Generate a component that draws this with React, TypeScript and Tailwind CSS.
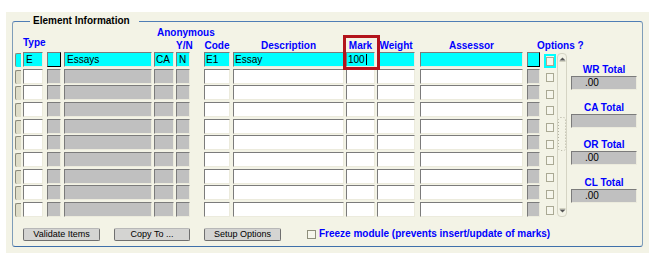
const inset =
  "border border-t-[#7b7b7b] border-l-[#7b7b7b] border-b-[#ecebdd] border-r-[#ecebdd]";

function Cell({ cls, children }: { cls: string; children?: React.ReactNode }) {
  return (
    <div className={`${inset} ${cls} text-[10px] leading-[13px] text-black whitespace-nowrap overflow-hidden`}>
      {children}
    </div>
  );
}

function Row({ active }: { active: boolean }) {
  const white = active ? "bg-[#00ffff]" : "bg-white";
  const grey = active ? "bg-[#00ffff]" : "bg-[#c0c0c0]";
  const small = active
    ? "bg-[#00ffff] !border-b-black !border-r-black"
    : "bg-[#c0c0c0]";
  return (
    <div className="flex h-[15px]">
      <div
        className={`ml-[2px] mt-[1px] w-[6px] rounded-l-[2px] border-l border-t border-[#8a8a7a] ${
          active ? "bg-[#00ffff]" : "bg-[#deddc9]"
        }`}
      />
      <Cell cls={`ml-[2px] w-[20px] pl-[2px] ${white}`}>{active && "E"}</Cell>
      <Cell cls={`ml-[4px] w-[14px] ${small}`} />
      <Cell cls={`ml-[3px] w-[88px] pl-[2px] ${grey}`}>{active && "Essays"}</Cell>
      <Cell cls={`ml-[2px] w-[20px] pl-[1px] ${grey}`}>{active && "CA"}</Cell>
      <Cell cls={`ml-[2px] w-[14px] pl-[2px] ${grey}`}>{active && "N"}</Cell>
      <Cell cls={`ml-[14px] w-[26px] pl-[1px] ${white}`}>{active && "E1"}</Cell>
      <Cell cls={`ml-[3px] w-[111px] pl-[1px] ${white}`}>{active && "Essay"}</Cell>
      <Cell cls={`ml-[2px] w-[29px] pl-[1px] ${white}`}>
        {active && (
          <span className="flex items-center">
            100
            <span className="ml-[1px] inline-block h-[11px] w-px bg-black" />
          </span>
        )}
      </Cell>
      <Cell cls={`ml-[2px] w-[38px] ${white}`} />
      <Cell cls={`ml-[5px] w-[103px] ${white}`} />
      <Cell cls={`ml-[4px] w-[13px] ${small}`} />
      <div
        className={`ml-[4px] mt-[2px] flex h-[14px] w-[12px] items-center justify-center border-[2px] ${
          active ? "border-[#00ffff]" : "border-transparent"
        }`}
      >
        <div className="h-[9px] w-[9px] border border-[#aaa994] bg-[#f6f6ec]" />
      </div>
    </div>
  );
}

function Total({ label, value, first }: { label: string; value: string; first?: boolean }) {
  return (
    <div className={first ? "mt-[12px]" : "mt-[11.5px]"}>
      <div className="h-[12px] text-center text-[10px] font-bold leading-[12px] text-[#0000ff]">{label}</div>
      <div className={`${inset} h-[14px] bg-[#c0c0c0] pl-[13px] text-[10px] leading-[12px] text-black`}>
        {value}
      </div>
    </div>
  );
}

function Button({ cls, label }: { cls: string; label: string }) {
  return (
    <div
      className={`${cls} h-[13px] rounded-[2px] border border-[#6f6f6f] border-t-[#b8b8b8] bg-[#d4d4d2] text-center text-[9px] leading-[11px] text-black`}
    >
      {label}
    </div>
  );
}

export default function App() {
  const rows = Array.from({ length: 10 }, (_, i) => i);
  return (
    <div className="h-[253px] w-[649px] bg-white pl-[6px] pt-[12px] font-['Liberation_Sans',Arial,sans-serif]">
      <div className="h-[241px] w-[643px] bg-[#f3f3e6] pl-[6px] pt-[9px]">
        <div className="relative h-[226px] w-[631px] rounded-[3px] border border-[#7f9db9] border-t-[#4f7db5] border-b-[#3f70aa]">
          <div className="absolute -top-[7px] left-[17px] bg-[#f3f3e6] pl-[3px] pr-[9px] text-[10px] font-bold leading-[12px] text-black">
            Element Information
          </div>
          <div className="absolute left-[330px] top-[13px] h-[35px] w-[37px] border-[3px] border-[#b3141c]" />

          {/* header */}
          <div className="h-[30px] text-[10px] font-bold leading-[12px] text-[#0000ff]">
            <div className="ml-[144px] h-[17px] pt-[5px]">Anonymous</div>
            <div className="mt-[1px] flex h-[12px] whitespace-nowrap">
              <div className="-mt-[3px] ml-[10px] w-[20px]">Type</div>
              <div className="ml-[133px] w-[14px] text-center">Y/N</div>
              <div className="ml-[14px] w-[26px] text-center">Code</div>
              <div className="ml-[3px] w-[111px] text-center">Description</div>
              <div className="ml-[2px] w-[29px] text-center">Mark</div>
              <div className="ml-[2px] w-[38px] text-center">Weight</div>
              <div className="ml-[5px] w-[103px] text-center">Assessor</div>
              <div className="ml-[14px]">Options ?</div>
            </div>
          </div>

          {/* rows, scrollbar, totals */}
          <div className="flex">
            <div className="flex flex-col gap-[1.67px]">
              {rows.map((i) => (
                <Row key={i} active={i === 0} />
              ))}
            </div>
            <div className="ml-[1px] mt-[1px] flex w-[10px] flex-col items-center rounded-[4px] border border-[#d5d4c4] py-[3px]">
              <svg width="7" height="5" viewBox="0 0 7 5">
                <path d="M3.5 0.5 L6.5 3.5 L0.5 3.5 Z" fill="#555" />
                <path d="M0.5 4.5 H6.5" stroke="#cfcfbf" />
              </svg>
              <svg className="mt-[55px]" width="8" height="34" viewBox="0 0 8 34">
                <rect x="0.5" y="0.5" width="7" height="33" rx="2" fill="none" stroke="#b4b3a2" strokeDasharray="1 2" />
              </svg>
              <div className="flex-1" />
              <svg width="7" height="5" viewBox="0 0 7 5">
                <path d="M0.5 0.5 H6.5" stroke="#cfcfbf" />
                <path d="M0.5 1.5 L6.5 1.5 L3.5 4.5 Z" fill="#555" />
              </svg>
            </div>
            <div className="ml-[4px] w-[66px]">
              <Total label="WR Total" value=".00" first />
              <Total label="CA Total" value="" />
              <Total label="OR Total" value=".00" />
              <Total label="CL Total" value=".00" />
            </div>
          </div>

          {/* buttons */}
          <div className="mt-[11px] flex items-center">
            <Button cls="ml-[10px] w-[77px]" label="Validate Items" />
            <Button cls="ml-[14px] w-[76px]" label="Copy To ..." />
            <Button cls="ml-[14px] w-[77px]" label="Setup Options" />
            <div className="ml-[26px] h-[9px] w-[9px] border border-[#8f8f7c] bg-[#f6f6ec]" />
            <div className="ml-[3px] text-[10px] font-bold leading-[12px] text-[#0000ff]">
              Freeze module (prevents insert/update of marks)
            </div>
          </div>
        </div>
      </div>
    </div>
  );
}
